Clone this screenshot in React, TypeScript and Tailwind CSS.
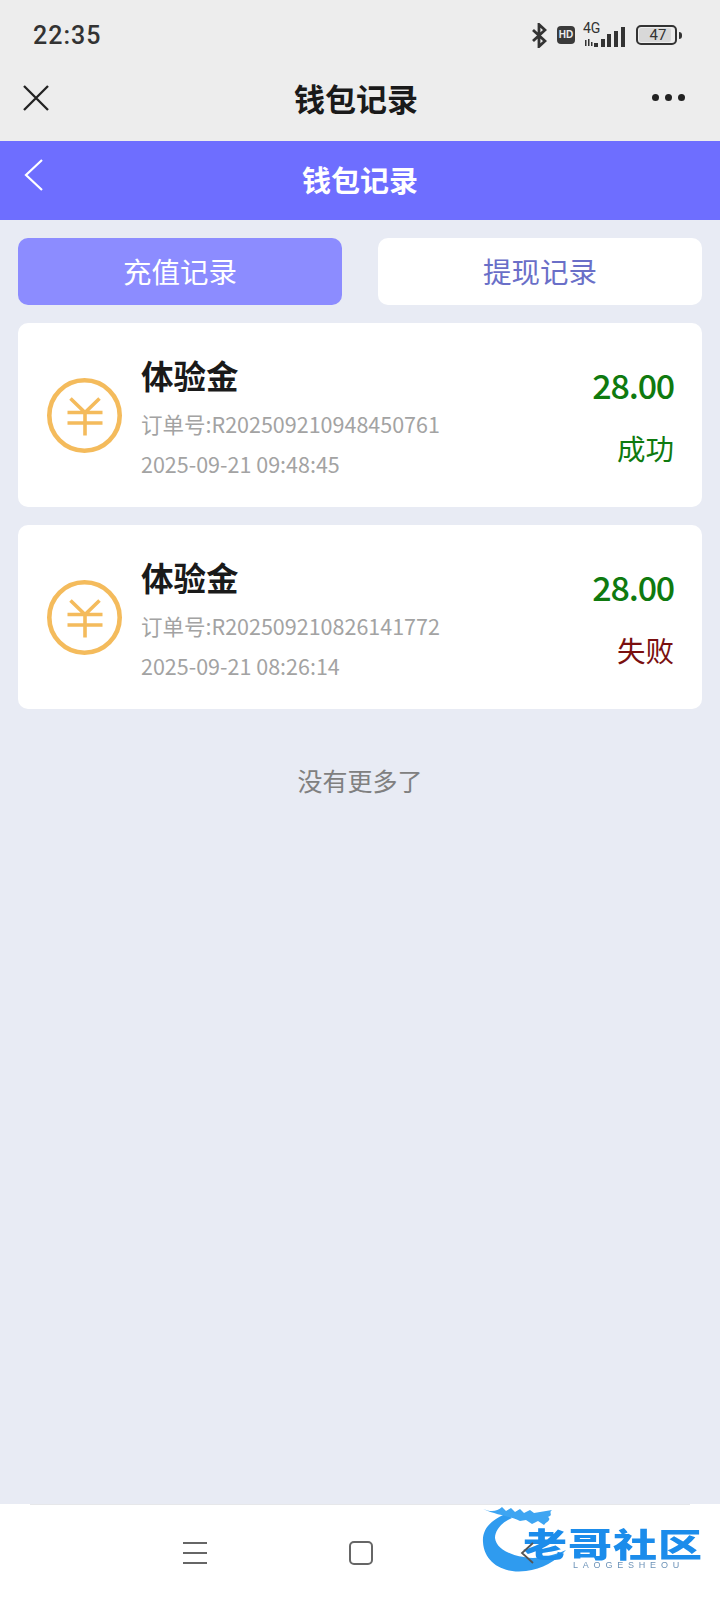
const records = [
  { order: "订单号:R202509210948450761", time: "2025-09-21 09:48:45", status: "成功", statusColor: "text-[#0f7a0f]" },
  { order: "订单号:R202509210826141772", time: "2025-09-21 08:26:14", status: "失败", statusColor: "text-[#7a0f0f]" },
];

function CoinIcon() {
  return (
    <svg width="75" height="75" viewBox="0 0 75 75" fill="none" stroke="#f4bb5c" className="shrink-0">
      <circle cx="37.500" cy="37.500" r="35.200" strokeWidth="4.600" />
      <path d="M23.500 20.500 L38 34.500 L52.500 20.500 M38 34.500 V57.500 M20.500 34.500 H55.500 M20.500 45 H55.500" strokeWidth="3.600" />
    </svg>
  );
}

function StatusIcons() {
  return (
    <div className="flex items-center">
      <svg width="15" height="25" viewBox="0 0 15 25" fill="none" stroke="#333" strokeWidth="2.800">
        <path d="M1 7 L13 18 L7 23.500 V1.500 L13 7 L1 18" />
      </svg>
      <span className="ml-[10px] flex h-[18px] w-[18px] items-center justify-center rounded-[4px] bg-[#3a3a3a] font-['Liberation_Sans',sans-serif] text-[10px] font-bold leading-none text-[#ededed]">
        HD
      </span>
      <div className="relative ml-[8px] h-[25px] w-[43px]">
        <span className="absolute left-0 top-[-3px] font-['Roboto',sans-serif] text-[14px] leading-[16px] text-[#333]">4G</span>
        <svg width="43" height="25" viewBox="0 0 43 25" fill="#333" className="absolute left-0 top-0">
          <path d="M2 17h1.500v6H2zM5 16h1.500v7H5zM8 19h1.500v4H8zM11 20h4v4h-4zM18 16h4v8h-4zM24 11h4v13h-4zM31 8h4v16h-4zM38 4h4v20h-4z" />
        </svg>
      </div>
      <div className="ml-[10px] flex h-[20px] w-[41px] items-center rounded-[5px] border-2 border-[#333] p-[1px]">
        <div className="flex h-full w-[32px] items-center justify-center rounded-[2px] bg-[#d8d8d8] pl-[6px] font-['Roboto',sans-serif] text-[15px] leading-none text-[#333]">
          47
        </div>
      </div>
      <div className="ml-[2px] h-[7px] w-[3px] rounded-r bg-[#333]" />
    </div>
  );
}

function RecordCard({ order, time, status, statusColor }: (typeof records)[number]) {
  return (
    <div className="flex h-[184px] items-center rounded-[10px] bg-white pl-[29px] pr-[28px]">
      <CoinIcon />
      <div className="ml-[19px] flex-1 pt-[4px]">
        <div className="-mt-[1px] text-[32.500px] font-bold leading-[44px] text-[#1a1a1a]">体验金</div>
        <div className="mt-[11px] text-[21.500px] leading-[32px] text-[#a3a3a3]">{order}</div>
        <div className="mt-[8px] text-[21.500px] leading-[32px] text-[#a3a3a3]">{time}</div>
      </div>
      <div className="flex flex-col items-end pt-[2px]">
        <div className="-mt-[2px] text-[34px] font-medium leading-[46px] tracking-[-1.200px] text-[#0f7a0f]">28.00</div>
        <div className={`mt-[20px] text-[28.500px] leading-[40px] ${statusColor}`}>{status}</div>
      </div>
    </div>
  );
}

function Watermark() {
  return (
    <div className="absolute left-[482px] top-[1505px] h-[70px] w-[226px] blur-[0.6px]">
      <svg width="100" height="70" viewBox="0 0 100 70" fill="none" className="absolute left-0 top-0">
        <path d="M24 9 C8 15 0 25 1 37 C2 58 22 69 44 66 C60 64 74 56 84 45 C70 51 54 55 42 52 C27 50 14 43 13 33 C13 25 20 17 30 13 Z" fill="#2f9bef" />
        <path d="M1 4 C8 7 15 7 20 2 L24 6 L29 3 L33 7 L38 4 L42 8 L48 5 L52 8 L70 5 C66 8 72 10 66 12 C70 15 64 17 62 20 L56 16 L50 19 L44 15 L38 16 C28 11 14 10 1 4 Z" fill="#3ea5f2" />
      </svg>
      <div className="absolute left-[41px] top-[24px] h-[36px] origin-top scale-y-75 whitespace-nowrap text-[44px] font-black leading-[36px] tracking-[1px] text-[#1b8ceb]">
        老哥社区
      </div>
      <div className="absolute left-[91px] top-[55px] whitespace-nowrap font-['Liberation_Sans',sans-serif] text-[9px] leading-[10px] tracking-[4.800px] text-[#6d93b8]">
        LAOGESHEOU
      </div>
    </div>
  );
}

export default function App() {
  return (
    <div className="relative flex h-[1600px] w-[720px] flex-col overflow-hidden bg-[#e8ebf4] font-['Noto_Sans_CJK_SC','Noto_Sans',sans-serif]">
      {/* system bar */}
      <div className="flex h-[64px] items-center justify-between bg-[#ededed] pl-[33px] pr-[38px] pt-[6px]">
        <span className="font-['Roboto',sans-serif] text-[25px] font-medium leading-none tracking-[1px] text-[#333]">22:35</span>
        <StatusIcons />
      </div>

      {/* webview title */}
      <div className="relative flex h-[77px] items-center justify-between bg-[#ededed] pb-[10px] pl-[23px] pr-[35px]">
        <svg width="26" height="26" viewBox="0 0 26 26" fill="none" stroke="#222" strokeWidth="2.300">
          <path d="M1 1 L25 25 M25 1 L1 25" />
        </svg>
        <span className="absolute inset-x-0 pr-[8px] text-center text-[31px] font-bold leading-[44px] text-[#1a1a1a]">钱包记录</span>
        <div className="flex gap-[6px]">
          <span className="h-[7px] w-[7px] rounded-full bg-[#222]" />
          <span className="h-[7px] w-[7px] rounded-full bg-[#222]" />
          <span className="h-[7px] w-[7px] rounded-full bg-[#222]" />
        </div>
      </div>

      {/* page header */}
      <div className="relative flex h-[79px] items-center bg-[#6e6eff] pl-[24px]">
        <svg width="20" height="34" viewBox="0 0 20 34" fill="none" stroke="#fff" strokeWidth="2.200" className="-mt-[11px]">
          <path d="M18 2 L2 17 L18 32" />
        </svg>
        <span className="absolute inset-x-0 pb-[4px] text-center text-[29px] font-bold leading-[40px] text-white">钱包记录</span>
      </div>

      {/* tabs */}
      <div className="mt-[18px] flex gap-[36px] px-[18px]">
        <div className="flex h-[67px] flex-1 items-center justify-center rounded-[10px] bg-[#8c8cff] text-[28.500px] text-white">充值记录</div>
        <div className="flex h-[67px] flex-1 items-center justify-center rounded-[10px] bg-white text-[28.500px] text-[#6a6fc8]">提现记录</div>
      </div>

      {/* list */}
      <div className="mt-[18px] flex flex-col gap-[18px] px-[18px]">
        {records.map((r) => (
          <RecordCard key={r.order} {...r} />
        ))}
      </div>

      <div className="mt-[53px] text-center text-[25px] leading-[36px] text-[#808080]">没有更多了</div>

      {/* bottom nav */}
      <div className="mt-auto flex h-[96px] flex-col bg-white">
        <div className="mx-[30px] h-px bg-[#e6e7ea]" />
        <div className="flex flex-1 items-center pl-[183px]">
          <div className="flex w-[24px] flex-col gap-[8px]">
            <span className="h-[2px] bg-[#666]" />
            <span className="h-[2px] bg-[#666]" />
            <span className="h-[2px] bg-[#666]" />
          </div>
          <div className="ml-[142px] h-[24px] w-[24px] rounded-[5px] border-2 border-[#666]" />
          <svg width="15" height="24" viewBox="0 0 15 24" fill="none" stroke="#555" strokeWidth="1.800" className="relative z-10 ml-[147px]">
            <path d="M13 2 L2 12 L13 22" />
          </svg>
        </div>
      </div>
      <Watermark />
    </div>
  );
}
